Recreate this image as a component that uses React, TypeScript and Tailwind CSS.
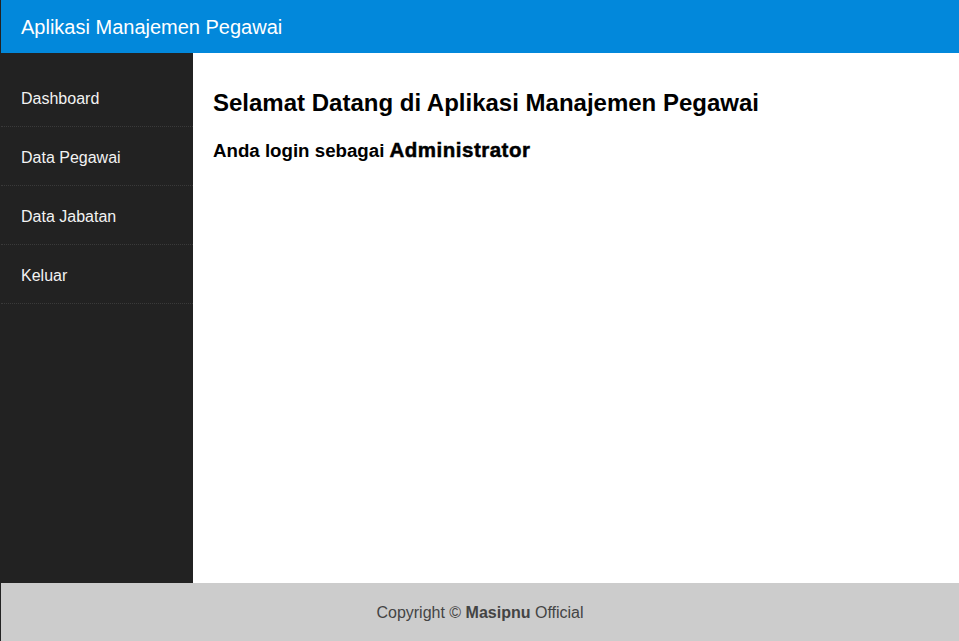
const MENU = ["Dashboard", "Data Pegawai", "Data Jabatan", "Keluar"];

export default function App() {
  return (
    <div
      className="flex h-[641px] flex-col border-l border-[#222]"
      style={{ fontFamily: "'Liberation Sans', Arial, sans-serif" }}
    >
      {/* header */}
      <header className="flex h-[53px] items-center bg-[#0288db] pl-5">
        <h1 className="text-[20px] leading-none text-white">Aplikasi Manajemen Pegawai</h1>
      </header>

      <div className="flex flex-1">
        {/* sidebar */}
        <nav className="w-[192px] bg-[#222222] pt-[15px]">
          {MENU.map((item) => (
            <a
              key={item}
              href="#"
              className="flex h-[59px] items-center border-b border-dotted border-[#3a3a3a] pl-5 pt-1 text-[16px] text-[#f2f2f2]"
            >
              {item}
            </a>
          ))}
        </nav>

        {/* content */}
        <main className="flex-1 bg-white px-5 pt-[36px] text-black">
          <h2 className="text-[24px] font-bold leading-[28px]">
            Selamat Datang di Aplikasi Manajemen Pegawai
          </h2>
          <h3 className="mt-[22px] text-[18.7px] font-bold leading-[22px]">
            Anda login sebagai{" "}
            <b className="text-[20.5px] tracking-[0.5px] [-webkit-text-stroke:0.5px_black]">Administrator</b>
          </h3>
        </main>
      </div>

      {/* footer */}
      <footer className="flex h-[58px] items-center justify-center bg-[#cccccc] pt-0.5 text-[16px] text-[#444]">
        <p>
          Copyright © <b>Masipnu</b> Official
        </p>
      </footer>
    </div>
  );
}
